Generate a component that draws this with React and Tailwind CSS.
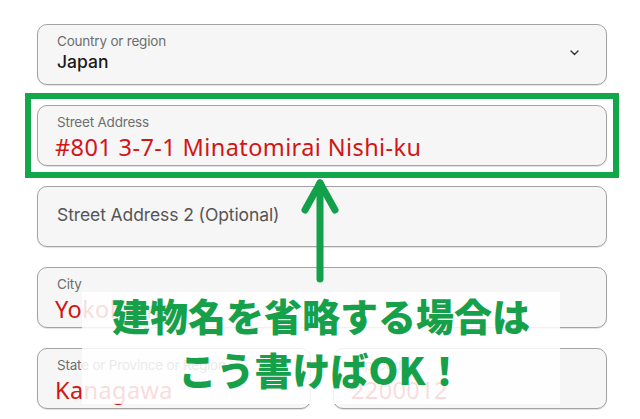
import React from 'react';

const sans = { fontFamily: 'Inter, "Liberation Sans", sans-serif' };

const Field = ({ label, value, red, placeholder, chevron }) => (
  <div className="relative h-[61px] rounded-[10px] border border-[#a3a3a3] bg-[#f6f6f6] px-[19px] shadow-[0_1px_1px_rgba(0,0,0,0.12)]">
    {placeholder ? (
      <div className="h-full flex items-center pb-[4px] text-[17.5px] text-[#555] leading-[22px] tracking-[-0.1px]">{placeholder}</div>
    ) : (
      <div className="pt-[8px]">
        <div className="text-[13.5px] text-[#6e6e6e] leading-[16px] truncate tracking-[-0.2px]">{label}</div>
        {red ? (
          <div className="text-[23.5px] text-[#d21515] leading-[27px] mt-[4px] tracking-[0.4px] -ml-[2px] font-['Noto_Sans',sans-serif]">{value}</div>
        ) : (
          <div className="text-[17.5px] text-[#1a1a1a] font-medium leading-[22px] mt-[2px]">{value}</div>
        )}
      </div>
    )}
    {chevron && (
      <svg className="absolute right-[27px] top-[25px]" width="9" height="6" viewBox="0 0 9 6" fill="none">
        <path d="M1 1l3.5 3.5L8 1" stroke="#333" strokeWidth="1.4" strokeLinecap="round" strokeLinejoin="round" />
      </svg>
    )}
  </div>
);

export default function App() {
  return (
    <div className="relative w-[640px] h-[419px] bg-white overflow-hidden" style={sans}>
      <div className="flex flex-col gap-[20px] pt-[24px] pl-[37px] w-[607px]">
        <Field label="Country or region" value="Japan" chevron />
        <div className="-my-[12px] -mx-[12px] border-[6px] border-[#12a84a] p-[6px]">
          <Field label="Street Address" value="#801 3-7-1 Minatomirai Nishi-ku" red />
        </div>
        <Field placeholder="Street Address 2 (Optional)" />
        <Field label="City" value="Yokohama" red />
        <div className="grid grid-cols-2 gap-[22px]">
          <Field label="State or Province or Region" value="Kanagawa" red />
          <Field label="Zip Code" value="2200012" red />
        </div>
      </div>

      {/* arrow */}
      <svg className="absolute left-[300px] top-[175px]" width="40" height="110" viewBox="0 0 40 110" fill="none">
        <path d="M20 8V104" stroke="#12a04a" strokeWidth="7" strokeLinecap="round" />
        <path d="M5 35L20 8L35 35" stroke="#12a04a" strokeWidth="7" strokeLinecap="round" strokeLinejoin="round" />
      </svg>

      {/* caption */}
      <div className="absolute left-[82px] top-[292px] w-[478px] h-[112px] bg-white/85 flex flex-col items-center -space-y-[0px]">
        <div className="text-[38px] leading-[54px] -mt-[4px] font-black text-[#16a04a]" style={{ fontFamily: '"Noto Sans CJK JP", sans-serif' }}>
          建物名を省略する場合は
        </div>
        <div className="text-[38px] leading-[54px] font-black text-[#16a04a]" style={{ fontFamily: '"Noto Sans CJK JP", sans-serif' }}>
          こう書けばOK！
        </div>
      </div>
    </div>
  );
}
